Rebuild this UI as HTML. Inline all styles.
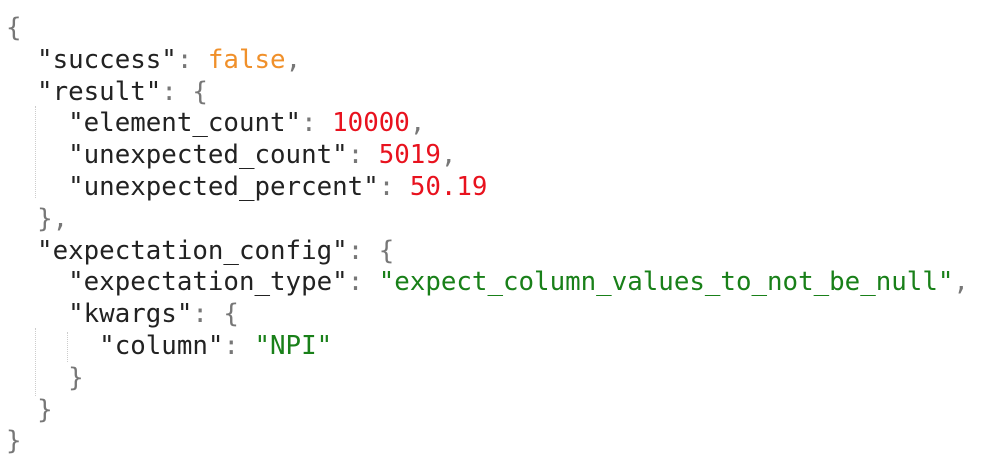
<!DOCTYPE html>
<html><head><meta charset="utf-8"><style>
html,body{margin:0;padding:0;background:#fff;width:1000px;height:474px;overflow:hidden}
pre{margin:0;position:absolute;left:6px;top:13px;font-family:"DejaVu Sans Mono","Liberation Mono",monospace;font-size:25.8px;line-height:31.8px;color:#222}
.p{color:#777}.o{color:#f0902a}.n{color:#e8121e}.s{color:#198019}
.g{position:absolute;border-left:1px dotted #ccc;width:0}
</style></head><body>
<div class="g" style="left:35px;top:106px;height:92px"></div>
<div class="g" style="left:35px;top:328px;height:68px"></div>
<div class="g" style="left:67px;top:332px;height:30px"></div>
<pre><span class="p">{</span>
  "success"<span class="p">:</span> <span class="o">false</span><span class="p">,</span>
  "result"<span class="p">: {</span>
    "element_count"<span class="p">:</span> <span class="n">10000</span><span class="p">,</span>
    "unexpected_count"<span class="p">:</span> <span class="n">5019</span><span class="p">,</span>
    "unexpected_percent"<span class="p">:</span> <span class="n">50.19</span>
  <span class="p">},</span>
  "expectation_config"<span class="p">: {</span>
    "expectation_type"<span class="p">:</span> <span class="s">"expect_column_values_to_not_be_null"</span><span class="p">,</span>
    "kwargs"<span class="p">: {</span>
      "column"<span class="p">:</span> <span class="s">"NPI"</span>
    <span class="p">}</span>
  <span class="p">}</span>
<span class="p">}</span></pre>
</body></html>
